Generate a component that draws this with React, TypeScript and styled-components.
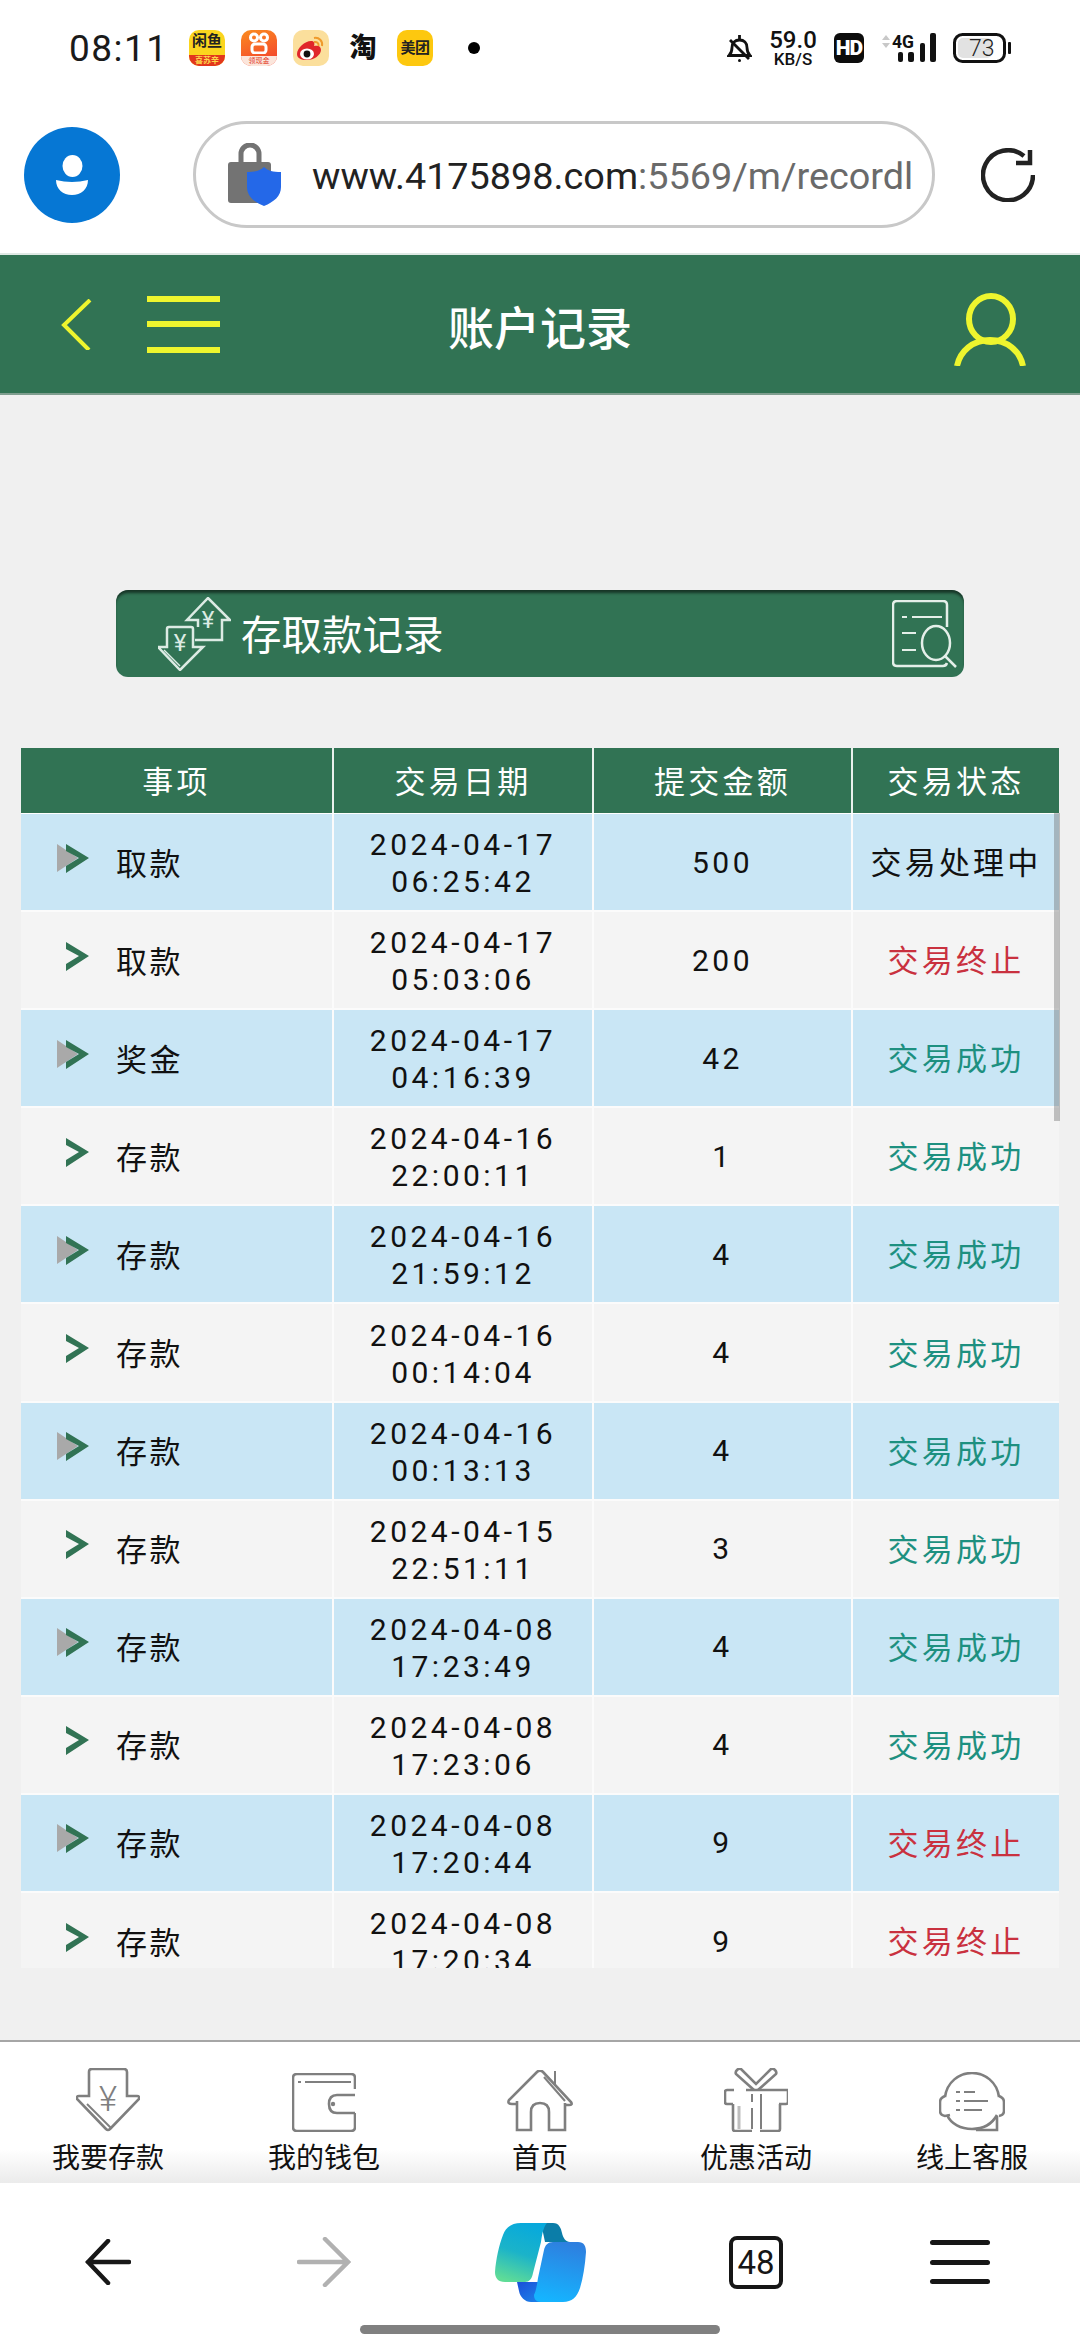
import React from 'react';
import styled, { createGlobalStyle } from 'styled-components';

const GREEN = '#317354';
const YELLOW = '#eef52e';
const NAV_GREY = '#7f7f7f';

const GlobalStyle = createGlobalStyle`
  html, body {
    margin: 0;
    padding: 0;
    background: #f0f0f0;
  }
  * {
    box-sizing: border-box;
  }
`;

type Status = 'pending' | 'failed' | 'success';

interface RecordItem {
  kind: string;
  date: string;
  time: string;
  amount: string;
  status: Status;
}

const STATUS_TEXT: Record<Status, string> = {
  pending: '交易处理中',
  failed: '交易终止',
  success: '交易成功',
};

const STATUS_COLOR: Record<Status, string> = {
  pending: '#111111',
  failed: '#c9313f',
  success: '#1d9080',
};

const records: RecordItem[] = [
  { kind: '取款', date: '2024-04-17', time: '06:25:42', amount: '500', status: 'pending' },
  { kind: '取款', date: '2024-04-17', time: '05:03:06', amount: '200', status: 'failed' },
  { kind: '奖金', date: '2024-04-17', time: '04:16:39', amount: '42', status: 'success' },
  { kind: '存款', date: '2024-04-16', time: '22:00:11', amount: '1', status: 'success' },
  { kind: '存款', date: '2024-04-16', time: '21:59:12', amount: '4', status: 'success' },
  { kind: '存款', date: '2024-04-16', time: '00:14:04', amount: '4', status: 'success' },
  { kind: '存款', date: '2024-04-16', time: '00:13:13', amount: '4', status: 'success' },
  { kind: '存款', date: '2024-04-15', time: '22:51:11', amount: '3', status: 'success' },
  { kind: '存款', date: '2024-04-08', time: '17:23:49', amount: '4', status: 'success' },
  { kind: '存款', date: '2024-04-08', time: '17:23:06', amount: '4', status: 'success' },
  { kind: '存款', date: '2024-04-08', time: '17:20:44', amount: '9', status: 'failed' },
  { kind: '存款', date: '2024-04-08', time: '17:20:34', amount: '9', status: 'failed' },
];

const Chevron = ({ shaded }: { shaded: boolean }) => (
  <ChevronSvg width="32" height="30" viewBox="0 0 32 30">
    {shaded && <polygon points="0,0 21,14 0,28" fill="#a9a9a9" />}
    <polygon points="9,0 32,14 9,29 9,22 22,14 9,7" fill={GREEN} />
  </ChevronSvg>
);

const WeiboIcon = () => (
  <svg width="36" height="36" viewBox="0 0 36 36">
    <rect width="36" height="36" rx="10" fill="#fbdf9c" />
    <path d="M4 24c0-6 8-13 14-13 3 0 4 2 3 5 4-1 7 0 7 4 0 5-7 10-14 10-6 0-10-2-10-6z" fill="#e0262a" />
    <ellipse cx="14" cy="24" rx="7" ry="5.500" fill="#fff" />
    <circle cx="14" cy="24" r="3.400" fill="#111" />
    <path d="M21 8c5-1 9 3 8 8M21 12c3-.5 5 1 4.500 4" fill="none" stroke="#ef9a2b" strokeWidth="2" />
  </svg>
);

const BellMuted = () => (
  <svg width="25" height="30" viewBox="0 0 25 30" fill="none" stroke="#111" strokeWidth="2.800">
    <path d="M2 22.500c2-2 3-4 3-8 0-4.500 3-7.500 7.500-7.500s7.500 3 7.500 7.500c0 4 1 6 3 8z" />
    <path d="M12.500 6V2" />
    <path d="M3 7l19 19" />
    <circle cx="12.500" cy="27.500" r="1.500" fill="#111" stroke="none" />
  </svg>
);

const NetworkIcon = () => (
  <svg width="55" height="30" viewBox="0 0 55 30">
    <path d="M1 7l4-5 4 5zM1 10l4 5 4-5z" fill="#c8c8c8" />
    <text x="11" y="15" fontFamily="Roboto, sans-serif" fontWeight="700" fontSize="19" textLength="22" lengthAdjust="spacingAndGlyphs" fill="#111">4G</text>
    <rect x="17" y="19" width="5" height="10" rx="2" fill="#111" />
    <rect x="27" y="19" width="6" height="10" rx="2" fill="#111" />
    <rect x="39" y="10" width="5" height="19" rx="2" fill="#111" />
    <rect x="49" y="0" width="6" height="29" rx="2" fill="#111" />
  </svg>
);

const BatteryIcon = () => (
  <svg width="58" height="30" viewBox="0 0 58 30">
    <rect x="5" y="5" width="34" height="20" rx="5" fill="#e2e2e2" />
    <rect x="1.500" y="1.500" width="50" height="27" rx="8" fill="none" stroke="#111" strokeWidth="3" />
    <rect x="55" y="9" width="3" height="12" rx="1" fill="#111" />
    <text x="16" y="23" fontFamily="Roboto, sans-serif" fontWeight="300" fontSize="23" fill="#222">73</text>
  </svg>
);

const AvatarIcon = () => (
  <svg width="96" height="96" viewBox="0 0 96 96">
    <circle cx="48" cy="48" r="48" fill="#0677d4" />
    <ellipse cx="48.500" cy="39" rx="10" ry="11" fill="#fff" />
    <path d="M32 53q16 4 32 0c0 9-7 15-16 15s-16-6-16-15z" fill="#fff" />
  </svg>
);

const LockIcon = () => (
  <svg width="53" height="63" viewBox="0 0 53 63">
    <path d="M13 20V11a9 9 0 0 1 18 0v9" fill="none" stroke="#737373" strokeWidth="5" />
    <rect x="0" y="19" width="43" height="41" rx="3" fill="#737373" />
    <path d="M36 24c4 4 9 5 17 5v15c0 9-7 15-17 19-10-4-17-10-17-19V29c8 0 13-1 17-5z" fill="#2468e8" />
  </svg>
);

const ReloadIcon = () => (
  <svg width="54" height="54" viewBox="0 0 54 54" fill="none" stroke="#222" strokeWidth="4.500">
    <path d="M52 27A25 25 0 1 1 43 8" />
    <path d="M49 2V15H35" />
  </svg>
);

const BackIcon = () => (
  <svg width="32" height="51" viewBox="0 0 32 51" fill="none" stroke={YELLOW} strokeWidth="4">
    <path d="M30 1L4 26l25 25" />
  </svg>
);

const PersonIcon = () => (
  <svg width="72" height="73" viewBox="0 0 72 73" fill="none" stroke={YELLOW} strokeWidth="6">
    <ellipse cx="37" cy="26" rx="22" ry="23" />
    <path d="M3 73c3-15 16-26 33-26s30 11 33 26" />
  </svg>
);

const ExchangeIcon = () => (
  <svg width="73" height="74" viewBox="0 0 73 74" fill="none" stroke="#dcebe4" strokeWidth="2.500">
    <path d="M40 30v-7H29L50 1l22 22h-8v20H37" />
    <path d="M9 50V32q0-2 2-2h22q2 0 2 2v18h10L22 73 0 50z" />
    <path d="M6 53l16 16" strokeWidth="1.500" />
    <text x="50" y="31" textAnchor="middle" fontFamily="Roboto, sans-serif" fontSize="24" fill="#dcebe4" stroke="none">¥</text>
    <text x="22" y="54" textAnchor="middle" fontFamily="Roboto, sans-serif" fontSize="24" fill="#dcebe4" stroke="none">¥</text>
  </svg>
);

const RecordSearchIcon = () => (
  <svg width="66" height="68" viewBox="0 0 66 68" fill="none" stroke="#e4efe9" strokeWidth="2.500">
    <path d="M55 27V5q0-4-4-4H5Q1 1 1 5v57q0 4 4 4h46q3 0 4-3" />
    <path d="M10 17h5M20 17h30M10 33h14M10 50h14" strokeWidth="2" />
    <ellipse cx="44" cy="43" rx="14" ry="17" />
    <path d="M53 56l11 11" />
  </svg>
);

const DepositIcon = () => (
  <svg width="64" height="64" viewBox="0 0 64 64" fill="none" stroke={NAV_GREY} strokeWidth="2.600">
    <path d="M13 28V4q0-3 3-3h32q3 0 3 3v24h10q3 0 2 3L34 61q-2 2-4 0L1 31q-1-3 2-3z" />
    <path d="M11 36l24 24" strokeWidth="2" />
    <text x="32" y="43" textAnchor="middle" fontFamily="Roboto, sans-serif" fontSize="35" fontWeight="300" fill={NAV_GREY} stroke="none">¥</text>
  </svg>
);

const WalletIcon = () => (
  <svg width="64" height="59" viewBox="0 0 64 59" fill="none" stroke={NAV_GREY} strokeWidth="2.600">
    <path d="M63 16V5q0-4-4-4H5Q1 1 1 5v49q0 4 4 4h54q4 0 4-4V40" />
    <path d="M6 9h3M13 9h46" strokeWidth="2" />
    <path d="M63 22H45q-8 0-8 9t8 9h18" />
    <circle cx="41" cy="31" r="2.200" fill={NAV_GREY} stroke="none" />
  </svg>
);

const HomeIcon = () => (
  <svg width="66" height="62" viewBox="0 0 66 62" fill="none" stroke={NAV_GREY} strokeWidth="2.600">
    <path d="M10 31v29h14V42q0-9 9-9t9 9v18h16V33" />
    <path d="M10 34H5q-5 0-3-4L30 2q3-3 6 0l28 30q2 3-2 3h-4" />
    <path d="M37 7l21 24" strokeWidth="2" />
    <path d="M48 1v15" strokeWidth="2" />
  </svg>
);

const GiftIcon = () => (
  <svg width="64" height="64" viewBox="0 0 64 64" fill="none" stroke={NAV_GREY} strokeWidth="2.600">
    <path d="M30 22L12 6q-1-2 1-4t4-1l15 15 15-15q2-1 4 1t1 4L34 22" />
    <path d="M10 22H3q-2 0-2 2v10q0 2 2 2h6M22 22h42v12q0 2-2 2h-7" />
    <path d="M9 36v25q0 2 2 2h17M36 63h18q2 0 2-2V36" />
    <path d="M15 38v23" strokeWidth="3" stroke="#bdbdbd" />
    <path d="M28 26v8M28 40v21M37 26v35" strokeWidth="2" />
  </svg>
);

const ServiceIcon = () => (
  <svg width="66" height="60" viewBox="0 0 66 60" fill="none" stroke={NAV_GREY} strokeWidth="2.600">
    <path d="M6 25C8 10 20 1 33 1s25 9 27 24" />
    <path d="M6 24q-5 2-5 6v9q0 4 5 5l5-1" />
    <path d="M60 24q5 2 5 6v9q0 4-5 5" />
    <path d="M8 43c4 9 14 14 25 14 11 0 20-5 25-14" />
    <path d="M58 44v14H37" />
    <path d="M17 20h4M25 20h11M17 29h4M25 29h24M17 38h4M25 38h18" strokeWidth="2.200" />
  </svg>
);

const CopilotLogo = () => (
  <svg width="91" height="79" viewBox="0 0 91 79">
    <defs>
      <linearGradient id="ribbonLeft" x1="0.600" y1="0" x2="0.300" y2="1">
        <stop offset="0" stopColor="#07a9dc" />
        <stop offset="0.500" stopColor="#1bb3c9" />
        <stop offset="1" stopColor="#5fdc97" />
      </linearGradient>
      <linearGradient id="ribbonRight" x1="0.600" y1="0" x2="0.400" y2="1">
        <stop offset="0" stopColor="#2e7fdf" />
        <stop offset="1" stopColor="#15b4ff" />
      </linearGradient>
      <linearGradient id="ribbonFoot" x1="0" y1="0" x2="0.800" y2="1">
        <stop offset="0" stopColor="#1b4fd8" />
        <stop offset="1" stopColor="#1c7fe8" />
      </linearGradient>
    </defs>
    <path d="M46 0h12c6 0 8 5 9 10 1 5 4 9 8 9H50z" fill="#0b7da8" />
    <path d="M22 59h22l2 20H36c-6 0-11-5-12-11z" fill="url(#ribbonFoot)" />
    <path d="M26 0H52C49 3 47 10 46 19L38 50C37 56 34 59 30 59H10C3 59 0 55 0 49C1 36 4 22 8 12C11 4 17 0 26 0Z" fill="url(#ribbonLeft)" />
    <path d="M64 19H83C89 19 91 23 91 29C90 43 88 55 85 65C82 74 77 79 68 79H46C41 79 39 76 39 72C41 68 42 62 43 55L49 27C50 22 53 19 58 19Z" fill="url(#ribbonRight)" />
  </svg>
);

const ArrowLeft = () => (
  <svg width="46" height="46" viewBox="0 0 46 46" fill="none" stroke="#181818" strokeWidth="4.500" strokeLinecap="round">
    <path d="M23 2L3 23l20 21M3 23h41" />
  </svg>
);

const ArrowRight = () => (
  <svg width="54" height="50" viewBox="0 0 54 50" fill="none" stroke="#b1b1b1" strokeWidth="4.500" strokeLinecap="round">
    <path d="M28 2l23 23-23 23M2 25h49" />
  </svg>
);

export default function App() {
  return (
    <Screen>
      <GlobalStyle />
      <StatusBar>
        <Clock>08:11</Clock>
        <AppIcons>
          <XianyuIcon>
            <span>闲鱼</span>
            <XianyuStrip>喜苏辛</XianyuStrip>
          </XianyuIcon>
          <KuaishouIcon>
            <KuaishouMark>
              <svg width="22" height="22" viewBox="0 0 22 22" fill="none" stroke="#fff" strokeWidth="3">
                <circle cx="6" cy="5.500" r="3.500" />
                <circle cx="16" cy="5.500" r="3.500" />
                <rect x="4" y="12" width="14" height="9" rx="3" />
              </svg>
            </KuaishouMark>
            <KuaishouStrip>领现金</KuaishouStrip>
          </KuaishouIcon>
          <WeiboIcon />
          <TaobaoGlyph>淘</TaobaoGlyph>
          <MeituanIcon>美团</MeituanIcon>
          <NoticeDot />
        </AppIcons>
        <StatusRight>
          <BellMuted />
          <SpeedMeter>
            <SpeedValue>59.0</SpeedValue>
            <SpeedUnit>KB/S</SpeedUnit>
          </SpeedMeter>
          <HdBadge>HD</HdBadge>
          <NetworkIcon />
          <BatteryIcon />
        </StatusRight>
      </StatusBar>

      <BrowserBar>
        <AvatarIcon />
        <UrlPill>
          <LockIcon />
          <UrlText>
            www.4175898.com<UrlPath>:5569/m/recordl</UrlPath>
          </UrlText>
        </UrlPill>
        <ReloadIcon />
      </BrowserBar>

      <PageHeader>
        <BackIcon />
        <MenuLines>
          <span />
          <span />
          <span />
        </MenuLines>
        <PageTitle>账户记录</PageTitle>
        <PersonSlot>
          <PersonIcon />
        </PersonSlot>
      </PageHeader>

      <Main>
        <Banner>
          <ExchangeIcon />
          <BannerTitle>存取款记录</BannerTitle>
          <BannerEnd>
            <RecordSearchIcon />
          </BannerEnd>
        </Banner>

        <TableWrap>
          <HeaderRow>
            <HeaderCell>事项</HeaderCell>
            <HeaderCell>交易日期</HeaderCell>
            <HeaderCell>提交金额</HeaderCell>
            <HeaderCell>交易状态</HeaderCell>
          </HeaderRow>
          <RowList>
            {records.map((r, i) => (
              <Row key={r.time} $tinted={i % 2 === 0}>
                <KindCell>
                  <Chevron shaded={i % 2 === 0} />
                  <KindText>{r.kind}</KindText>
                </KindCell>
                <DateCell>
                  {r.date}
                  <br />
                  {r.time}
                </DateCell>
                <Cell>{r.amount}</Cell>
                <StatusCell $color={STATUS_COLOR[r.status]}>{STATUS_TEXT[r.status]}</StatusCell>
              </Row>
            ))}
          </RowList>
          <ScrollThumb />
        </TableWrap>
      </Main>

      <TabBar>
        <Tab>
          <TabIcon><DepositIcon /></TabIcon>
          <TabLabel>我要存款</TabLabel>
        </Tab>
        <Tab>
          <TabIcon><WalletIcon /></TabIcon>
          <TabLabel>我的钱包</TabLabel>
        </Tab>
        <Tab>
          <TabIcon><HomeIcon /></TabIcon>
          <TabLabel>首页</TabLabel>
        </Tab>
        <Tab>
          <TabIcon><GiftIcon /></TabIcon>
          <TabLabel>优惠活动</TabLabel>
        </Tab>
        <Tab>
          <TabIcon><ServiceIcon /></TabIcon>
          <TabLabel>线上客服</TabLabel>
        </Tab>
      </TabBar>

      <BrowserNav>
        <NavRow>
          <ArrowLeft />
          <ArrowRight />
          <CopilotLogo />
          <TabCount>48</TabCount>
          <NavMenu>
            <span />
            <span />
            <span />
          </NavMenu>
        </NavRow>
        <HomeBar />
      </BrowserNav>
    </Screen>
  );
}

const FONT = `Roboto, "Noto Sans CJK SC", sans-serif`;

const Screen = styled.div`
  width: 1080px;
  height: 2340px;
  display: flex;
  flex-direction: column;
  overflow: hidden;
  background: #f0f0f0;
  font-family: ${FONT};
`;

const StatusBar = styled.div`
  height: 96px;
  flex: none;
  background: #fff;
  display: flex;
  align-items: center;
  padding: 0 69px;
`;

const Clock = styled.div`
  width: 120px;
  font-size: 37px;
  letter-spacing: 1.5px;
  color: #1a1a1a;
`;

const AppIcons = styled.div`
  display: flex;
  align-items: center;
  gap: 16px;
`;

const XianyuIcon = styled.div`
  width: 36px;
  height: 36px;
  border-radius: 10px;
  overflow: hidden;
  background: #fbd51e;
  display: flex;
  flex-direction: column;
  align-items: center;
  justify-content: space-between;
  font-size: 15px;
  font-weight: 700;
  line-height: 22px;
  color: #222;
`;

const XianyuStrip = styled.div`
  width: 100%;
  height: 11px;
  background: #e2371d;
  color: #fdd54a;
  font-size: 8px;
  line-height: 11px;
  text-align: center;
`;

const KuaishouIcon = styled.div`
  width: 36px;
  height: 36px;
  border-radius: 10px;
  overflow: hidden;
  background: linear-gradient(160deg, #fb8c1f, #f23a2f);
  display: flex;
  flex-direction: column;
  align-items: center;
`;

const KuaishouMark = styled.div`
  height: 26px;
  display: flex;
  align-items: center;
`;

const KuaishouStrip = styled.div`
  width: 100%;
  height: 10px;
  background: #fbe6dc;
  color: #e2371d;
  font-size: 7px;
  line-height: 10px;
  text-align: center;
`;

const TaobaoGlyph = styled.div`
  width: 36px;
  text-align: center;
  font-size: 27px;
  font-weight: 900;
  line-height: 36px;
  color: #111;
`;

const MeituanIcon = styled.div`
  width: 36px;
  height: 36px;
  border-radius: 10px;
  background: #fdc80f;
  font-size: 15px;
  font-weight: 700;
  line-height: 36px;
  text-align: center;
  letter-spacing: -0.5px;
  color: #222;
`;

const NoticeDot = styled.div`
  width: 12px;
  height: 12px;
  margin-left: 19px;
  border-radius: 50%;
  background: #000;
`;

const StatusRight = styled.div`
  margin-left: auto;
  display: flex;
  align-items: center;
  gap: 17px;
`;

const SpeedMeter = styled.div`
  width: 48px;
  display: flex;
  flex-direction: column;
  align-items: center;
  color: #111;
`;

const SpeedValue = styled.div`
  font-size: 24px;
  font-weight: 500;
  line-height: 22px;
`;

const SpeedUnit = styled.div`
  font-size: 17px;
  font-weight: 500;
  line-height: 16px;
`;

const HdBadge = styled.div`
  width: 30px;
  height: 30px;
  border-radius: 6px;
  background: #0c0c0c;
  color: #fff;
  font-size: 21px;
  font-weight: 900;
  line-height: 30px;
  text-align: center;
  letter-spacing: -1px;
`;

const BrowserBar = styled.div`
  height: 157px;
  flex: none;
  background: #fff;
  display: flex;
  align-items: center;
  padding-left: 24px;
`;

const UrlPill = styled.div`
  width: 742px;
  height: 107px;
  margin: 0 46px 0 73px;
  border: 3px solid #c8c8c8;
  border-radius: 54px;
  background: #fff;
  display: flex;
  align-items: center;
  gap: 31px;
  padding-left: 32px;
`;

const UrlText = styled.div`
  width: 601px;
  padding-top: 3px;
  overflow: hidden;
  white-space: nowrap;
  font-size: 37.8px;
  color: #222;
`;

const UrlPath = styled.span`
  color: #6a6a6a;
`;

const PageHeader = styled.div`
  height: 142px;
  flex: none;
  position: relative;
  background: ${GREEN};
  border-top: 2px solid #dfe9e4;
  border-bottom: 2px solid #7f9e8f;
  display: flex;
  align-items: center;
  padding-left: 60px;
`;

const MenuLines = styled.div`
  width: 73px;
  height: 57px;
  margin-left: 55px;
  display: flex;
  flex-direction: column;
  justify-content: space-between;
  & > span {
    display: block;
    height: 6px;
    background: ${YELLOW};
  }
`;

const PageTitle = styled.div`
  width: 310px;
  margin: 10px 0 0 165px;
  text-align: center;
  color: #fff;
  font-size: 46px;
  font-weight: 500;
  line-height: 60px;
`;

const PersonSlot = styled.div`
  margin-left: auto;
  margin-right: 54px;
  padding-top: 10px;
  display: flex;
`;

const Main = styled.div`
  flex: 1;
  min-height: 0;
  display: flex;
  flex-direction: column;
  padding: 195px 21px 0;
`;

const Banner = styled.div`
  width: 848px;
  height: 87px;
  margin-left: 95px;
  flex: none;
  border-radius: 12px;
  background: ${GREEN};
  box-shadow: inset 0 4px 3px -1px rgba(0, 0, 0, 0.55);
  display: flex;
  align-items: center;
  padding-left: 42px;
  color: #fff;
`;

const BannerTitle = styled.div`
  margin: 5px 0 0 10px;
  font-size: 40.5px;
  line-height: 50px;
`;

const BannerEnd = styled.div`
  margin-left: auto;
  margin-right: 6px;
  display: flex;
`;

const TableWrap = styled.div`
  position: relative;
  margin-top: 71px;
  width: 1038px;
  color: #111;
`;

const COLUMNS = '311px 260px 259px 208px';

const HeaderRow = styled.div`
  display: grid;
  grid-template-columns: ${COLUMNS};
  height: 66px;
  background: ${GREEN};
  border-bottom: 1px solid #fff;
`;

const HeaderCell = styled.div`
  display: flex;
  align-items: center;
  justify-content: center;
  padding-bottom: 2px;
  color: #fff;
  font-size: 31px;
  letter-spacing: 3.2px;
  & + & {
    border-left: 2px solid #e9f1ed;
  }
`;

const RowList = styled.div`
  height: 1154px;
  overflow: hidden;
`;

const Row = styled.div<{ $tinted: boolean }>`
  display: grid;
  grid-template-columns: ${COLUMNS};
  height: 98.1px;
  background: ${({ $tinted }) => ($tinted ? '#c9e6f5' : '#f4f4f4')};
  border-bottom: 2px solid #fbfbfb;
`;

const Cell = styled.div<{ $color?: string }>`
  display: flex;
  align-items: center;
  justify-content: center;
  text-align: center;
  font-size: 30px;
  line-height: 37px;
  letter-spacing: 3.5px;
  color: ${({ $color }) => $color || '#111'};
  border-left: 2px solid #fbfbfb;
  white-space: nowrap;
`;

const DateCell = styled(Cell)`
  padding-top: 2px;
`;

const StatusCell = styled(Cell)`
  padding-top: 3px;
  font-size: 31px;
  letter-spacing: 3.2px;
`;

const KindCell = styled.div`
  display: flex;
  align-items: center;
  padding-left: 36px;
`;

const ChevronSvg = styled.svg`
  flex: none;
  margin-top: -7px;
`;

const KindText = styled.div`
  margin: -2px 0 0 27px;
  font-size: 31px;
  letter-spacing: 2.5px;
`;

const ScrollThumb = styled.div`
  position: absolute;
  top: 65px;
  right: -1px;
  width: 6px;
  height: 308px;
  background: rgba(115, 115, 115, 0.42);
`;

const TabBar = styled.div`
  height: 143px;
  flex: none;
  display: grid;
  grid-template-columns: repeat(5, 216px);
  border-top: 2px solid #a6a6a6;
  background: linear-gradient(#fff 0, #fff 76%, #ebebeb 100%);
`;

const Tab = styled.div`
  display: flex;
  flex-direction: column;
  align-items: center;
  padding-top: 26px;
`;

const TabIcon = styled.div`
  height: 64px;
  display: flex;
  align-items: flex-end;
`;

const TabLabel = styled.div`
  margin-top: 11px;
  font-size: 28px;
  line-height: 32px;
  color: #111;
`;

const BrowserNav = styled.div`
  height: 157px;
  flex: none;
  background: #fff;
  padding-top: 26px;
`;

const NavRow = styled.div`
  height: 106px;
  display: grid;
  grid-template-columns: repeat(5, 216px);
  align-items: center;
  justify-items: center;
`;

const TabCount = styled.div`
  width: 54px;
  height: 53px;
  border: 4px solid #161616;
  border-radius: 8px;
  color: #161616;
  font-size: 33px;
  line-height: 45px;
  text-align: center;
`;

const NavMenu = styled.div`
  width: 60px;
  height: 44px;
  margin-right: 24px;
  display: flex;
  flex-direction: column;
  justify-content: space-between;
  & > span {
    display: block;
    height: 5px;
    border-radius: 3px;
    background: #161616;
  }
`;

const HomeBar = styled.div`
  width: 360px;
  height: 9px;
  margin: 10px auto 0;
  border-radius: 5px;
  background: #808080;
`;
